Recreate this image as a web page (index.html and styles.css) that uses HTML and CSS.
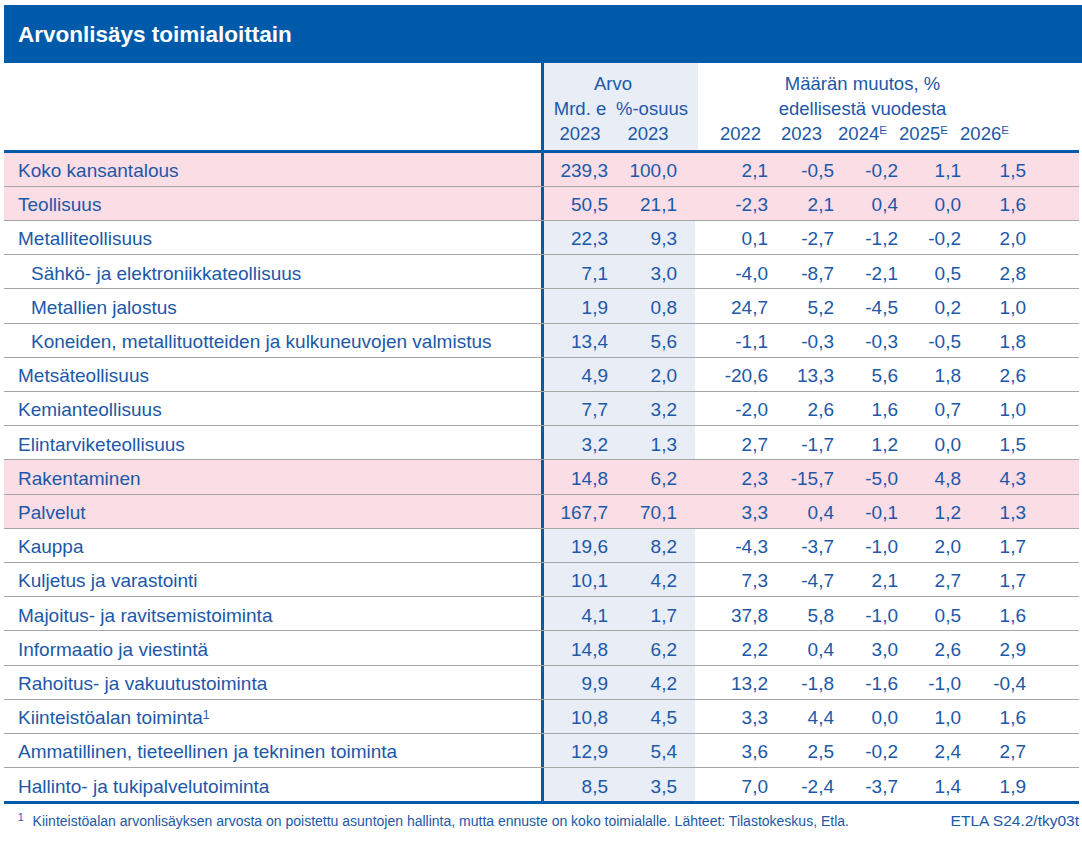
FILE: index.html
```html
<!DOCTYPE html>
<html lang="fi">
<head>
<meta charset="utf-8">
<title>Arvonlisäys toimialoittain</title>
<link rel="stylesheet" href="styles.css">
</head>
<body>
<div class="page">
  <div class="title">Arvonlisäys toimialoittain</div>
  <div class="table">
    <div class="thead">
      <div class="h-label"></div>
      <div class="h-arvo">
        <div class="h-line h-arvo-title">Arvo</div>
        <div class="h-arvo-grid">
          <div class="h-line">Mrd. e</div>
          <div class="h-line">%-osuus</div>
          <div class="h-line">2023</div>
          <div class="h-line">2023</div>
        </div>
      </div>
      <div class="h-change">
        <div class="h-line">Määrän muutos, %</div>
        <div class="h-line">edellisestä vuodesta</div>
        <div class="h-years">
          <div class="h-line">2022</div>
          <div class="h-line">2023</div>
          <div class="h-line">2024<sup class="est">E</sup></div>
          <div class="h-line">2025<sup class="est">E</sup></div>
          <div class="h-line">2026<sup class="est">E</sup></div>
        </div>
      </div>
    </div>

    <div class="row hl"><div class="lab">Koko kansantalous</div><div class="n a1">239,3</div><div class="n a2">100,0</div><div class="n">2,1</div><div class="n">-0,5</div><div class="n">-0,2</div><div class="n">1,1</div><div class="n">1,5</div></div>
    <div class="row hl"><div class="lab">Teollisuus</div><div class="n a1">50,5</div><div class="n a2">21,1</div><div class="n">-2,3</div><div class="n">2,1</div><div class="n">0,4</div><div class="n">0,0</div><div class="n">1,6</div></div>
    <div class="row"><div class="lab">Metalliteollisuus</div><div class="n a1">22,3</div><div class="n a2">9,3</div><div class="n">0,1</div><div class="n">-2,7</div><div class="n">-1,2</div><div class="n">-0,2</div><div class="n">2,0</div></div>
    <div class="row"><div class="lab ind">Sähkö- ja elektroniikkateollisuus</div><div class="n a1">7,1</div><div class="n a2">3,0</div><div class="n">-4,0</div><div class="n">-8,7</div><div class="n">-2,1</div><div class="n">0,5</div><div class="n">2,8</div></div>
    <div class="row"><div class="lab ind">Metallien jalostus</div><div class="n a1">1,9</div><div class="n a2">0,8</div><div class="n">24,7</div><div class="n">5,2</div><div class="n">-4,5</div><div class="n">0,2</div><div class="n">1,0</div></div>
    <div class="row"><div class="lab ind">Koneiden, metallituotteiden ja kulkuneuvojen valmistus</div><div class="n a1">13,4</div><div class="n a2">5,6</div><div class="n">-1,1</div><div class="n">-0,3</div><div class="n">-0,3</div><div class="n">-0,5</div><div class="n">1,8</div></div>
    <div class="row"><div class="lab">Metsäteollisuus</div><div class="n a1">4,9</div><div class="n a2">2,0</div><div class="n">-20,6</div><div class="n">13,3</div><div class="n">5,6</div><div class="n">1,8</div><div class="n">2,6</div></div>
    <div class="row"><div class="lab">Kemianteollisuus</div><div class="n a1">7,7</div><div class="n a2">3,2</div><div class="n">-2,0</div><div class="n">2,6</div><div class="n">1,6</div><div class="n">0,7</div><div class="n">1,0</div></div>
    <div class="row"><div class="lab">Elintarviketeollisuus</div><div class="n a1">3,2</div><div class="n a2">1,3</div><div class="n">2,7</div><div class="n">-1,7</div><div class="n">1,2</div><div class="n">0,0</div><div class="n">1,5</div></div>
    <div class="row hl"><div class="lab">Rakentaminen</div><div class="n a1">14,8</div><div class="n a2">6,2</div><div class="n">2,3</div><div class="n">-15,7</div><div class="n">-5,0</div><div class="n">4,8</div><div class="n">4,3</div></div>
    <div class="row hl"><div class="lab">Palvelut</div><div class="n a1">167,7</div><div class="n a2">70,1</div><div class="n">3,3</div><div class="n">0,4</div><div class="n">-0,1</div><div class="n">1,2</div><div class="n">1,3</div></div>
    <div class="row"><div class="lab">Kauppa</div><div class="n a1">19,6</div><div class="n a2">8,2</div><div class="n">-4,3</div><div class="n">-3,7</div><div class="n">-1,0</div><div class="n">2,0</div><div class="n">1,7</div></div>
    <div class="row"><div class="lab">Kuljetus ja varastointi</div><div class="n a1">10,1</div><div class="n a2">4,2</div><div class="n">7,3</div><div class="n">-4,7</div><div class="n">2,1</div><div class="n">2,7</div><div class="n">1,7</div></div>
    <div class="row"><div class="lab">Majoitus- ja ravitsemistoiminta</div><div class="n a1">4,1</div><div class="n a2">1,7</div><div class="n">37,8</div><div class="n">5,8</div><div class="n">-1,0</div><div class="n">0,5</div><div class="n">1,6</div></div>
    <div class="row"><div class="lab">Informaatio ja viestintä</div><div class="n a1">14,8</div><div class="n a2">6,2</div><div class="n">2,2</div><div class="n">0,4</div><div class="n">3,0</div><div class="n">2,6</div><div class="n">2,9</div></div>
    <div class="row"><div class="lab">Rahoitus- ja vakuutustoiminta</div><div class="n a1">9,9</div><div class="n a2">4,2</div><div class="n">13,2</div><div class="n">-1,8</div><div class="n">-1,6</div><div class="n">-1,0</div><div class="n">-0,4</div></div>
    <div class="row"><div class="lab">Kiinteistöalan toiminta<sup class="note">1</sup></div><div class="n a1">10,8</div><div class="n a2">4,5</div><div class="n">3,3</div><div class="n">4,4</div><div class="n">0,0</div><div class="n">1,0</div><div class="n">1,6</div></div>
    <div class="row"><div class="lab">Ammatillinen, tieteellinen ja tekninen toiminta</div><div class="n a1">12,9</div><div class="n a2">5,4</div><div class="n">3,6</div><div class="n">2,5</div><div class="n">-0,2</div><div class="n">2,4</div><div class="n">2,7</div></div>
    <div class="row last"><div class="lab">Hallinto- ja tukipalvelutoiminta</div><div class="n a1">8,5</div><div class="n a2">3,5</div><div class="n">7,0</div><div class="n">-2,4</div><div class="n">-3,7</div><div class="n">1,4</div><div class="n">1,9</div></div>
  </div>
  <div class="footer">
    <div class="foot-note"><sup class="fn">1</sup>Kiinteistöalan arvonlisäyksen arvosta on poistettu asuntojen hallinta, mutta ennuste on koko toimialalle. Lähteet: Tilastokeskus, Etla.</div>
    <div class="foot-id">ETLA S24.2/tky03t</div>
  </div>
</div>
</body>
</html>
```

FILE: styles.css
```css
html, body {
  margin: 0;
  padding: 0;
  background: #ffffff;
}

body {
  font-family: "Liberation Sans", Arial, sans-serif;
  color: #1c58a8;
}

.page {
  width: 1075px;
  padding: 5px 0 0 4px;
}

.title {
  height: 58px;
  margin-right: -3px;
  background: #005aaa;
  color: #ffffff;
  font-weight: bold;
  font-size: 22.5px;
  display: flex;
  align-items: center;
  padding: 1px 0 0 14px;
  box-sizing: border-box;
}

.table {
  border-bottom: 3px solid #005aaa;
}

.thead {
  display: flex;
  height: 89.5px;
  border-bottom: 3px solid #005aaa;
  box-sizing: border-box;
}

.h-label {
  width: 537px;
}

.h-arvo {
  width: 154px;
  border-left: 3px solid #005aaa;
  background: #e8edf6;
  padding-top: 8px;
}

.h-line {
  line-height: 25px;
  font-size: 18.5px;
  white-space: nowrap;
  text-align: center;
}

.h-arvo-title {
  width: 136px;
  padding-left: 1px;
}

.h-arvo-grid {
  display: grid;
  grid-template-columns: 72px 64px;
}

.h-change {
  padding: 8px 0 0 12px;
  width: 305px;
}

.h-years {
  display: grid;
  grid-template-columns: repeat(5, 61px);
}

.est {
  font-size: 11.5px;
  vertical-align: top;
  line-height: 1;
  position: relative;
  top: 4px;
}

.row {
  display: grid;
  grid-template-columns: 537px 71px 83px 77px 66px 64px 63px 65px;
  border-bottom: 1px solid #a6a6a6;
  font-size: 19px;
}

.row.last {
  border-bottom: none;
}

.row.hl {
  background: #fbdde5;
}

.row > div {
  line-height: 29.7px;
  padding-top: 3.5px;
  white-space: nowrap;
}

.lab {
  padding-left: 14px;
}

.lab.ind {
  padding-left: 27px;
}

.n {
  text-align: right;
  padding-right: 4px;
}

.n.a1 {
  border-left: 3px solid #005aaa;
  background: #e8edf6;
}

.n.a2 {
  background: #e8edf6;
  padding-right: 18px;
}

.row.hl .n.a1,
.row.hl .n.a2 {
  background: transparent;
}

.note {
  font-size: 12px;
  vertical-align: top;
  line-height: 1;
  position: relative;
  top: 6px;
}

.footer {
  display: flex;
  justify-content: space-between;
  align-items: baseline;
  font-size: 14px;
  line-height: 16px;
  padding-top: 9px;
}

.foot-note {
  padding-left: 14px;
}

.foot-id {
  font-size: 15.5px;
}

.fn {
  font-size: 10px;
  vertical-align: top;
  line-height: 1;
  position: relative;
  top: 0;
  margin-right: 9px;
}
```
